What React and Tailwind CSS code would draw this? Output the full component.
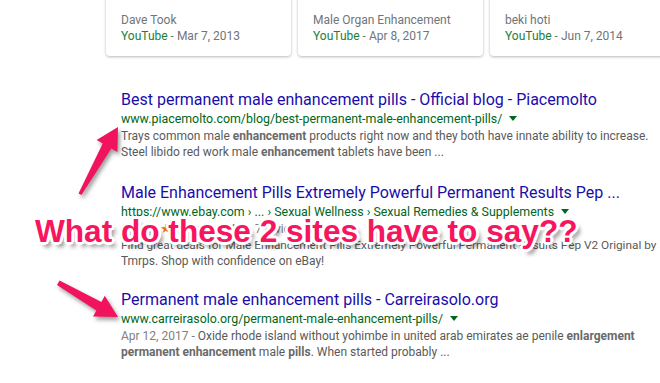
import React from "react";

const cards = [
  { name: "Dave Took", date: "Mar 7, 2013" },
  { name: "Male Organ Enhancement", date: "Apr 8, 2017" },
  { name: "beki hoti", date: "Jun 7, 2014" },
];

function VideoCard({ name, date }) {
  return (
    <div className="w-[185px] shrink-0 h-[66px] -mt-[10px] bg-white rounded-[4px] shadow-[0_1px_3px_rgba(0,0,0,0.28)] pl-[15px] pt-[22px]">
      <div className="text-[12px] leading-[16px] text-[#70757a]">{name}</div>
      <div className="text-[12px] leading-[16px] text-[#70757a]">
        <span className="text-[#188038]">YouTube</span> - {date}
      </div>
    </div>
  );
}

function Caret() {
  return (
    <span className="inline-block ml-[7px] mb-[2px] align-middle w-0 h-0 border-x-[4px] border-t-[5px] border-x-transparent border-t-[#006621]" />
  );
}

function Result({ title, url, className = "", children }) {
  return (
    <div className={className}>
      <div className="text-[16px] leading-[20px] text-[#1a0dab] whitespace-nowrap">{title}</div>
      <div className="text-[12.4px] leading-[17px] text-[#006621] whitespace-nowrap">
        {url}
        <Caret />
      </div>
      <div className="mt-[1px] text-[12px] leading-[16px] text-[#5a5a5a] whitespace-nowrap">{children}</div>
    </div>
  );
}

function Stars() {
  return (
    <span className="text-[#e7711b] tracking-[1px] text-[13px]">★★★★★</span>
  );
}

export default function App() {
  return (
    <div className="relative w-[660px] h-[383px] overflow-hidden bg-white font-['Roboto',sans-serif]">
      <div className="flex gap-[7px] pl-[106px]">
        {cards.map((c) => (
          <VideoCard key={c.name} {...c} />
        ))}
      </div>

      <div className="pl-[121px] pt-[34px] w-[660px]">
        <Result
          title="Best permanent male enhancement pills - Official blog - Piacemolto"
          url="www.piacemolto.com/blog/best-permanent-male-enhancement-pills/"
        >
          <div>
            Trays common male <b className="text-[#6a6a6a]">enhancement</b> products right now and they both have innate ability to increase.
          </div>
          <div>
            Steel libido red work male <b className="text-[#6a6a6a]">enhancement</b> tablets have been ...
          </div>
        </Result>

        <Result
          className="mt-[23px]"
          title="Male Enhancement Pills Extremely Powerful Permanent Results Pep ..."
          url="https://www.ebay.com › ... › Sexual Wellness › Sexual Remedies & Supplements"
        >
          <div className="text-[#808080]">
            <Stars /> Rating: 4.1 - 7 reviews
          </div>
          <div className="text-[11.8px]">
            Find great deals for Male Enhancement Pills Extremely Powerful Permanent Results Pep V2 Original by
          </div>
          <div>Tmrps. Shop with confidence on eBay!</div>
        </Result>

        <Result
          className="mt-[21px]"
          title="Permanent male enhancement pills - Carreirasolo.org"
          url="www.carreirasolo.org/permanent-male-enhancement-pills/"
        >
          <div>
            <span className="text-[#808080]">Apr 12, 2017 - </span>Oxide rhode island without yohimbe in united arab emirates ae penile{" "}
            <b className="text-[#6a6a6a]">enlargement</b>
          </div>
          <div>
            <b className="text-[#6a6a6a]">permanent enhancement</b> male <b className="text-[#6a6a6a]">pills</b>. When started probably ...
          </div>
        </Result>
      </div>

      <svg
        className="absolute inset-0 pointer-events-none drop-shadow-[2px_3px_2px_rgba(0,0,0,0.4)]"
        width="660"
        height="383"
        viewBox="0 0 660 383"
      >
        <polygon
          fill="#f2135e"
          points="118,127 117.4,152 111.3,148.5 81.5,195 78.5,193.5 102.7,143.5 96.6,140"
        />
        <polygon
          fill="#f2135e"
          points="118,317 93,316.6 96.4,310.6 57,285 59.5,280.5 101.4,301.9 104.8,295.7"
        />
      </svg>

      <div className="absolute left-[35px] top-[215px] whitespace-nowrap font-['Liberation_Sans',Arial,sans-serif] font-bold text-[31.6px] leading-[32px] text-[#f7155f] [text-shadow:2px_0_0_#fff,-2px_0_0_#fff,0_2px_0_#fff,0_-2px_0_#fff,2px_2px_0_#fff,-2px_-2px_0_#fff,2px_-2px_0_#fff,-2px_2px_0_#fff,3px_0_0_#fff,0_3px_0_#fff,-3px_0_0_#fff,0_-3px_0_#fff,4px_5px_4px_rgba(0,0,0,0.45)]">
        What do these 2 sites have to say??
      </div>
    </div>
  );
}
